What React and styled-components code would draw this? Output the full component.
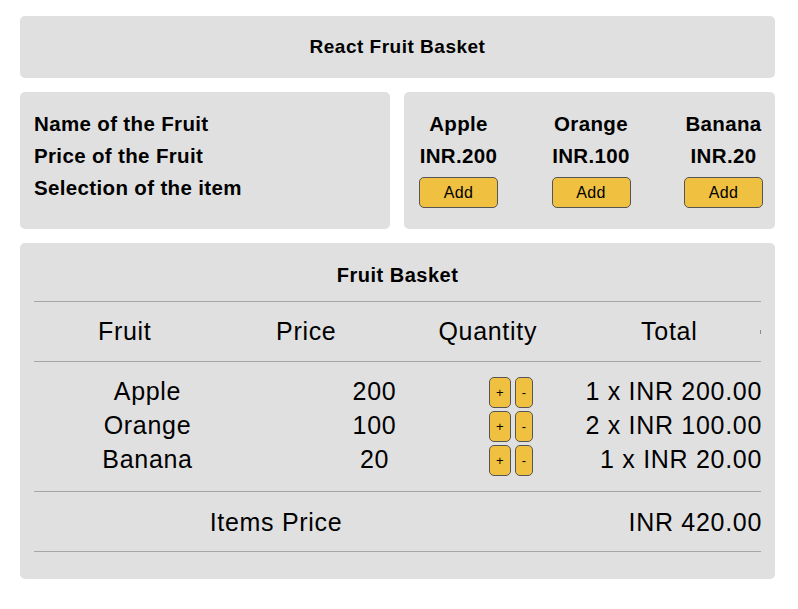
import React from "react";
import styled, { createGlobalStyle } from "styled-components";

const GlobalStyle = createGlobalStyle`
  html, body { margin: 0; padding: 0; background: #ffffff; }
  body { font-family: "Liberation Sans", Arial, sans-serif; color: #000; }
`;

const fruits = [
  { name: "Apple", price: 200, qty: 1 },
  { name: "Orange", price: 100, qty: 2 },
  { name: "Banana", price: 20, qty: 1 },
];

const Page = styled.div`
  width: 755px;
  padding: 16px 23px 29px 20px;
  display: flex;
  flex-direction: column;
  gap: 14px;
`;

const Panel = styled.section`
  background: #e0e0e0;
  border-radius: 5px;
`;

const HeaderPanel = styled(Panel)`
  height: 62px;
  display: flex;
  align-items: center;
  justify-content: center;
  font-size: 19px;
  font-weight: 700;
  letter-spacing: 0.5px;
`;

const InfoRow = styled.div`
  display: grid;
  grid-template-columns: 370px 371px;
  gap: 14px;
`;

const LabelsPanel = styled(Panel)`
  padding: 16px 14px;
`;

const BoldLine = styled.div`
  font-size: 20.5px;
  font-weight: 700;
  line-height: 32px;
  letter-spacing: 0.35px;
`;

const FruitsPanel = styled(Panel)`
  display: flex;
  justify-content: space-between;
  padding: 16px 12px 21px 15px;
`;

const FruitCol = styled.div`
  display: flex;
  flex-direction: column;
  align-items: center;
  text-align: center;
`;

const YellowButton = styled.button`
  background: #f0c040;
  border: 1px solid #555;
  border-radius: 5px;
  font-family: "Liberation Sans", Arial, sans-serif;
  color: #000;
  height: 31px;
  cursor: pointer;
  box-sizing: border-box;
`;

const AddButton = styled(YellowButton)`
  margin-top: 5px;
  width: 79px;
  font-size: 16px;
  letter-spacing: 0.3px;
  padding: 0;
`;

const BasketPanel = styled(Panel)`
  padding: 20px 14px 27px;
`;

const BasketTitle = styled.div`
  text-align: center;
  font-size: 20px;
  font-weight: 700;
  letter-spacing: 0.5px;
  line-height: 24px;
  padding-bottom: 14px;
`;

const HeadRow = styled.div`
  display: grid;
  grid-template-columns: repeat(4, 1fr) 1px;
  align-items: center;
  height: 59px;
  border-top: 1px solid #a6a6a6;
  border-bottom: 1px solid #a6a6a6;
  font-size: 25px;
  letter-spacing: 0.7px;
  text-align: center;
`;

const Tick = styled.span`
  display: block;
  width: 1px;
  height: 4px;
  background: #8a8a8a;
`;

const Body = styled.div`
  padding: 12px 0 15px;
  border-bottom: 1px solid #a6a6a6;
`;

const ItemRow = styled.div`
  display: grid;
  grid-template-columns: 1fr 1fr 46px 1fr;
  align-items: center;
  height: 34px;
  font-size: 25px;
  letter-spacing: 0.7px;
`;

const Cell = styled.div`
  text-align: ${(p) => p.$align || "center"};
  margin-right: ${(p) => (p.$align === "right" ? "-1px" : "0")};
  line-height: 28px;
`;

const QtyCell = styled.div`
  align-self: end;
  display: flex;
  justify-content: center;
  gap: 4px;
`;

const QtyButton = styled(YellowButton)`
  font-size: 13px;
  padding: 0 6px;
  letter-spacing: 0;
  line-height: 1;
`;

const FootRow = styled.div`
  display: grid;
  grid-template-columns: 484px 1fr;
  align-items: center;
  height: 59px;
  border-bottom: 1px solid #a6a6a6;
  font-size: 25px;
  letter-spacing: 0.7px;
`;

const fmt = (n) => n.toFixed(2);

export default function App() {
  const total = fruits.reduce((s, f) => s + f.price * f.qty, 0);
  return (
    <>
      <GlobalStyle />
      <Page>
        <HeaderPanel>React Fruit Basket</HeaderPanel>
        <InfoRow>
          <LabelsPanel>
            <BoldLine>Name of the Fruit</BoldLine>
            <BoldLine>Price of the Fruit</BoldLine>
            <BoldLine>Selection of the item</BoldLine>
          </LabelsPanel>
          <FruitsPanel>
            {fruits.map((f) => (
              <FruitCol key={f.name}>
                <BoldLine>{f.name}</BoldLine>
                <BoldLine>INR.{f.price}</BoldLine>
                <AddButton>Add</AddButton>
              </FruitCol>
            ))}
          </FruitsPanel>
        </InfoRow>
        <BasketPanel>
          <BasketTitle>Fruit Basket</BasketTitle>
          <HeadRow>
            <div>Fruit</div>
            <div>Price</div>
            <div>Quantity</div>
            <div>Total</div>
            <Tick />
          </HeadRow>
          <Body>
            {fruits.map((f) => (
              <ItemRow key={f.name}>
                <Cell>{f.name}</Cell>
                <Cell>{f.price}</Cell>
                <QtyCell>
                  <QtyButton>+</QtyButton>
                  <QtyButton>-</QtyButton>
                </QtyCell>
                <Cell $align="right">
                  {f.qty} x INR {fmt(f.price)}
                </Cell>
              </ItemRow>
            ))}
          </Body>
          <FootRow>
            <Cell>Items Price</Cell>
            <Cell $align="right">INR {fmt(total)}</Cell>
          </FootRow>
        </BasketPanel>
      </Page>
    </>
  );
}
